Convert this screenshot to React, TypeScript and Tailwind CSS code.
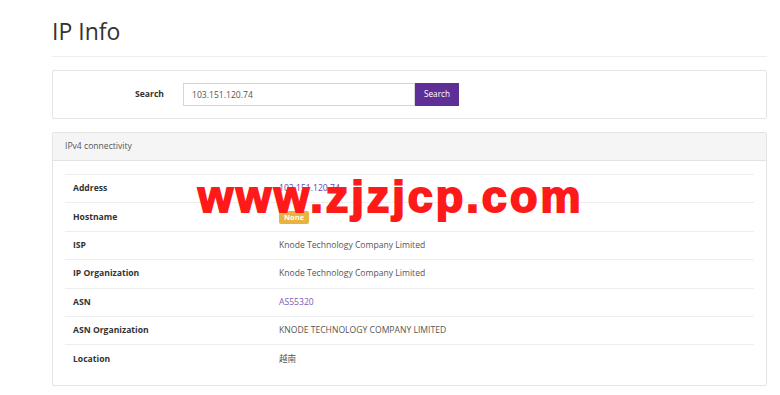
export default function App() {
  const rows: { label: string; value: React.ReactNode }[] = [
    {
      label: "Address",
      value: <a className="text-[#6a3fa8]">103.151.120.74</a>,
    },
    {
      label: "Hostname",
      value: (
        <span className="inline-block rounded-[2px] bg-[#e9b33f] px-[5px] py-[1px] text-[7.5px] font-bold leading-[11px] text-white">
          None
        </span>
      ),
    },
    { label: "ISP", value: "Knode Technology Company Limited" },
    { label: "IP Organization", value: "Knode Technology Company Limited" },
    { label: "ASN", value: <a className="text-[#8259b8]">AS55320</a> },
    { label: "ASN Organization", value: "KNODE TECHNOLOGY COMPANY LIMITED" },
    { label: "Location", value: "越南" },
  ];

  return (
    <main className="relative min-h-screen bg-white pl-[52px] pr-[13px] pt-[17px] font-['Open_Sans','Noto_Sans_CJK_SC',sans-serif] text-[8.6px] text-[#555]">
      <h1 className="text-[23px] font-medium leading-[28px] text-[#333]">IP Info</h1>
      <hr className="mt-[11px] border-[#eeeeee]" />

      {/* Search */}
      <section className="mt-[13px] flex h-[49px] items-center rounded-[2px] border border-[#e3e3e3]">
        <label className="w-[111px] text-right font-bold text-[#333]">Search</label>
        <div className="ml-[19px] flex">
          <input
            type="text"
            defaultValue="103.151.120.74"
            className="h-[23px] w-[232px] border border-[#d6d6d6] px-[8px] text-[8.6px] text-[#555] outline-none"
          />
          <button className="h-[23px] w-[44px] bg-[#5e2f96] text-[8.2px] text-white">Search</button>
        </div>
      </section>

      {/* IPv4 */}
      <section className="mt-[13px] rounded-[2px] border border-[#e3e3e3]">
        <div className="flex h-[28px] items-center border-b border-[#e3e3e3] bg-[#f5f5f5] px-[12px] text-[8.6px] text-[#555]">
          IPv4 connectivity
        </div>
        <div className="px-[12px] pb-[12px] pt-[13px]">
          <table className="w-full border-collapse">
            <tbody>
              {rows.map((r) => (
                <tr key={r.label} className="h-[28.4px] border-t border-[#eeeeee]">
                  <td className="w-[214px] pl-[8px] font-bold text-[#333]">{r.label}</td>
                  <td>{r.value}</td>
                </tr>
              ))}
            </tbody>
          </table>
        </div>
      </section>

      {/* watermark */}
      <div className="pointer-events-none absolute left-[198px] top-[174px] font-['Liberation_Sans',Arial,sans-serif] text-[45px] font-bold leading-none tracking-[3px] text-[#ff1a1a] [-webkit-text-stroke:2px_#ff1a1a]">
        www.zjzjcp.com
      </div>
    </main>
  );
}
